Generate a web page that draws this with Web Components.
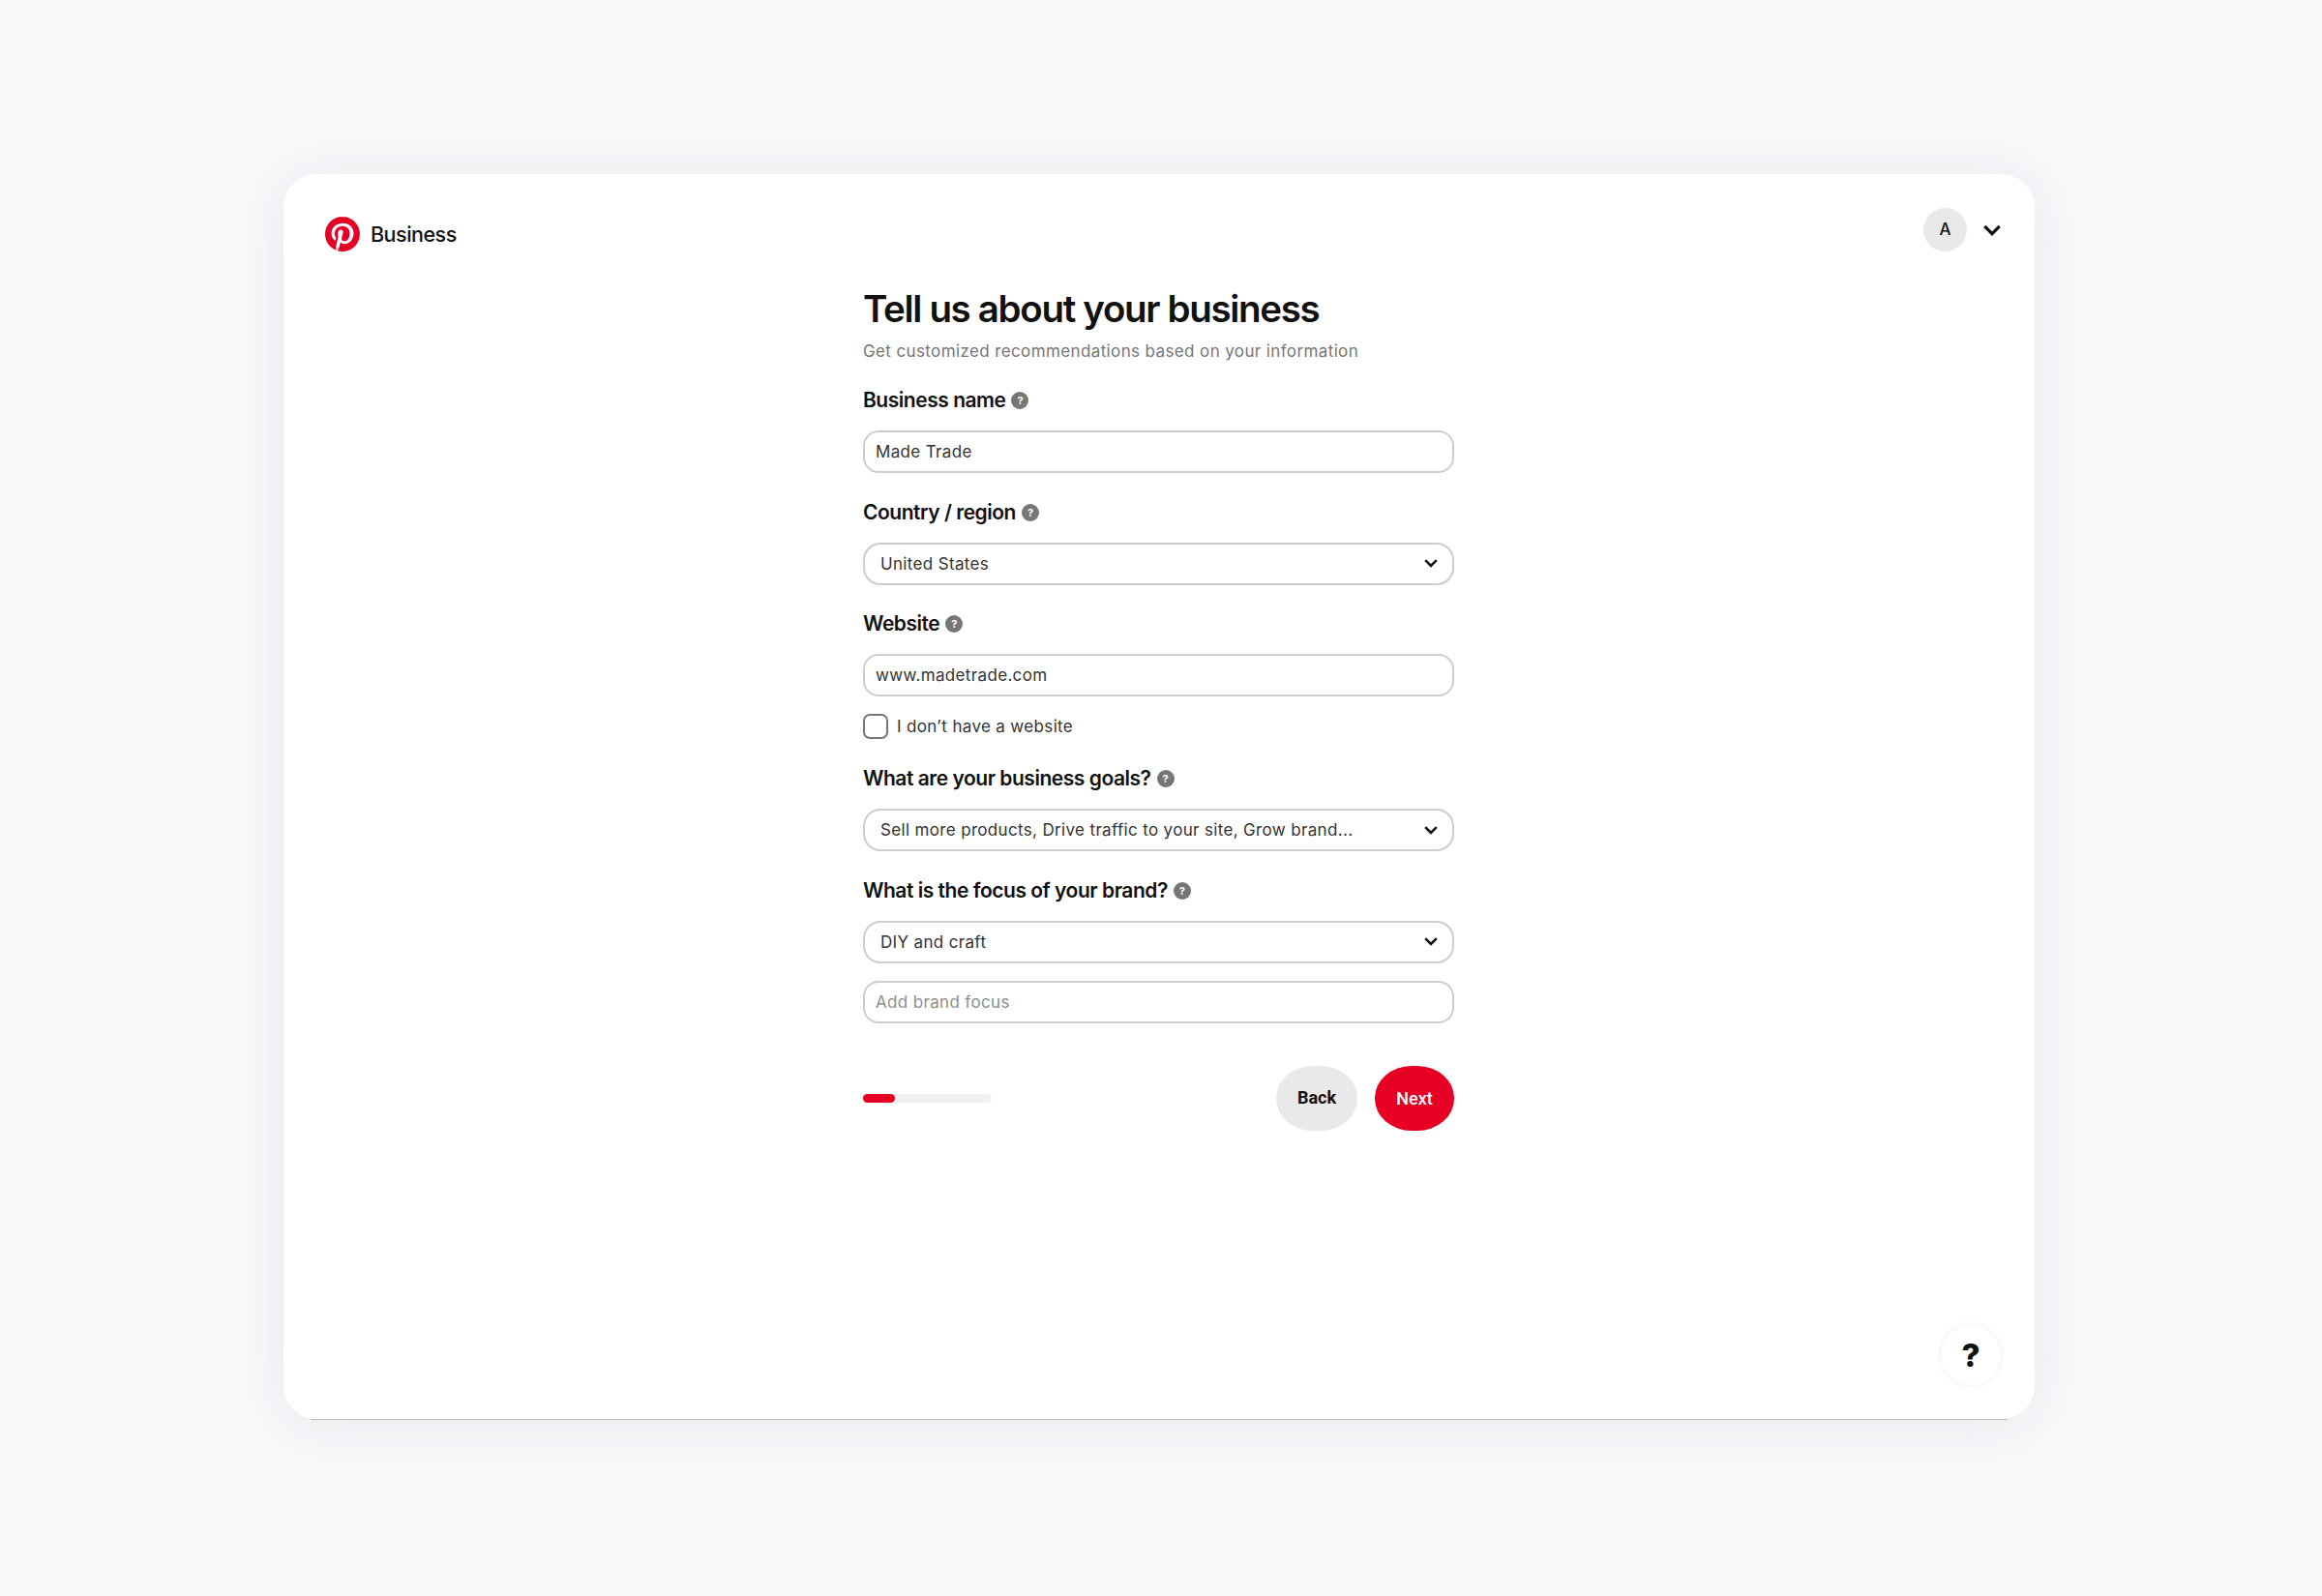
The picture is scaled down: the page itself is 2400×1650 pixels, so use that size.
<!DOCTYPE html>
<html lang="en">
<head>
<meta charset="utf-8">
<title>Pinterest Business</title>
<style>
  html, body { margin: 0; padding: 0; background: #f8f9fb; }
  body { font-family: Inter, "Liberation Sans", sans-serif; color: #111; }
</style>
</head>
<body>
<biz-page>
  <biz-header slot="header" initial="A"></biz-header>
  <biz-form>
    <biz-field label="Business name"><biz-input>Made Trade</biz-input></biz-field>
    <biz-field label="Country / region"><biz-select>United States</biz-select></biz-field>
    <biz-field label="Website">
      <biz-input>www.madetrade.com</biz-input>
      <biz-check>I don’t have a website</biz-check>
    </biz-field>
    <biz-field label="What are your business goals?"><biz-select>Sell more products, Drive traffic to your site, Grow brand...</biz-select></biz-field>
    <biz-field label="What is the focus of your brand?">
      <biz-select>DIY and craft</biz-select>
      <biz-input placeholder>Add brand focus</biz-input>
    </biz-field>
  </biz-form>
</biz-page>

<script>
// small helper, every element below is just a template + a shadow root
function tpl(html) {
  const t = document.createElement('template');
  t.innerHTML = html;
  return t;
}

class Base extends HTMLElement {
  connectedCallback() {
    if (this.shadowRoot) return;
    const root = this.attachShadow({mode: 'open'});
    root.appendChild(this.constructor.template.content.cloneNode(true));
    if (this.ready) this.ready(root);
  }
}

const chevron = `<svg viewBox="0 0 14 9" width="14" height="9"><path d="M1.2 1.2 7 7l5.8-5.8" fill="none" stroke="#111" stroke-width="2.6"/></svg>`;

class BizPage extends Base {
  static template = tpl(`
    <style>
      :host { display: block; padding: 180px 297px 183px 293px; }
      .card {
        position: relative; height: 1287px; box-sizing: border-box;
        background: #fff; border-radius: 34px;
        box-shadow: 0 4px 60px rgba(30,40,60,.085);
        padding: 35px 35px 0 43px;
      }
      /* thin grey line on the bottom edge, stops where the corners start */
      .card::after {
        content: ""; position: absolute; left: 28px; right: 28px; bottom: -1px; height: 1px; background: #bdbdbd;
      }
      .fab {
        position: absolute; right: 35px; bottom: 35px;
        width: 62px; height: 62px; border-radius: 50%; background: #fff;
        box-shadow: 0 0 6px rgba(0,0,0,.07);
        display: flex; align-items: center; justify-content: center;
        font: 800 33px/1 Inter, sans-serif; color: #111;
      }
    </style>
    <div class="card">
      <slot name="header"></slot>
      <slot></slot>
      <div class="fab">?</div>
    </div>
  `);
}

class BizHeader extends Base {
  static template = tpl(`
    <style>
      :host { display: flex; justify-content: space-between; align-items: flex-start; height: 45px; }
      .brand { display: flex; align-items: center; gap: 11px; margin-top: 9px; font: 500 21.5px/36px Inter, sans-serif; letter-spacing: -.5px; color: #111; }
      .brand svg { display: block; }
      .user { display: flex; align-items: center; gap: 17px; }
      .avatar { width: 45px; height: 45px; border-radius: 50%; background: #e9e9e9; display: flex; align-items: center; justify-content: center; font: 500 17px/1 Inter, sans-serif; color: #111; }
      .chev { display: block; }
    </style>
    <div class="brand">
      <svg viewBox="0 0 24 24" width="36" height="36"><circle cx="12" cy="12" r="11" fill="#fff"/><path fill="#e60023" d="M12.017 0C5.396 0 .029 5.367.029 11.987c0 5.079 3.158 9.417 7.618 11.162-.105-.949-.199-2.403.041-3.439.219-.937 1.406-5.957 1.406-5.957s-.359-.72-.359-1.781c0-1.663.967-2.911 2.168-2.911 1.024 0 1.518.769 1.518 1.688 0 1.029-.653 2.567-.992 3.992-.285 1.193.6 2.165 1.775 2.165 2.128 0 3.768-2.245 3.768-5.487 0-2.861-2.063-4.869-5.008-4.869-3.41 0-5.409 2.562-5.409 5.199 0 1.033.394 2.143.889 2.741.099.12.112.225.085.345-.09.375-.293 1.199-.334 1.363-.053.225-.172.271-.401.165-1.495-.69-2.433-2.878-2.433-4.646 0-3.776 2.748-7.252 7.92-7.252 4.158 0 7.392 2.967 7.392 6.923 0 4.135-2.607 7.462-6.233 7.462-1.214 0-2.354-.629-2.758-1.379l-.749 2.848c-.269 1.045-1.004 2.352-1.498 3.146 1.123.345 2.306.535 3.55.535 6.607 0 11.985-5.365 11.985-11.987C23.97 5.39 18.592.026 11.985.026L12.017 0z"/></svg>
      <span>Business</span>
    </div>
    <div class="user">
      <div class="avatar"></div>
      <svg class="chev" viewBox="0 0 18 12" width="18" height="12"><path d="M1.3 1.9 9 9.6l7.7-7.7" fill="none" stroke="#111" stroke-width="3.3"/></svg>
    </div>
  `);
  ready(root) {
    root.querySelector('.avatar').textContent = this.getAttribute('initial');
  }
}

class BizForm extends Base {
  static template = tpl(`
    <style>
      :host { display: block; width: 611px; margin: 35px 0 0 556px; }
      h1 { margin: 0 0 8px; font: 600 38.5px/48px Inter, sans-serif; letter-spacing: -1.33px; color: #111; }
      p { margin: 0 0 24px; font: 400 17px/24px Inter, sans-serif; letter-spacing: .38px; color: #767676; }
      .foot { display: flex; align-items: center; justify-content: space-between; margin-top: 44px; }
      .track { width: 133px; height: 9px; border-radius: 5px; background: #f0f0f0; }
      .fill { width: 33px; height: 9px; border-radius: 5px; background: #e60023; }
      .btns { display: flex; gap: 18px; }
    </style>
    <h1>Tell us about your business</h1>
    <p>Get customized recommendations based on your information</p>
    <slot></slot>
    <div class="foot">
      <div class="track"><div class="fill"></div></div>
      <div class="btns">
        <biz-button>Back</biz-button>
        <biz-button primary>Next</biz-button>
      </div>
    </div>
  `);
}

class BizField extends Base {
  static template = tpl(`
    <style>
      :host { display: block; margin-bottom: 25.5px; }
      :host(:last-child) { margin-bottom: 0; }
      .label { display: flex; align-items: center; gap: 6px; height: 28px; padding-top: 1px; margin: 0 0 17px; font: 600 21px/28px Inter, sans-serif; letter-spacing: -.47px; color: #111; }
      .help { width: 18px; height: 18px; border-radius: 50%; background: #767676; color: #fff; font: 700 11px/18px Inter, sans-serif; letter-spacing: 0; text-align: center; }
      .body { display: flex; flex-direction: column; gap: 18px; }
    </style>
    <div class="label"><span class="text"></span><span class="help">?</span></div>
    <div class="body"><slot></slot></div>
  `);
  ready(root) {
    root.querySelector('.text').textContent = this.getAttribute('label');
  }
}

const boxCss = `
  :host { display: flex; align-items: center; height: 44px; box-sizing: border-box; background: #fff;
    border: 2px solid #cdcdcd; border-radius: 16px;
    font: 400 17px/24px Inter, sans-serif; letter-spacing: .34px; color: #333; }
`;

class BizInput extends Base {
  static template = tpl(`
    <style>
      ${boxCss}
      :host { padding: 0 11px; }
      :host([placeholder]) { color: #8e8e8e; }
    </style>
    <slot></slot>
  `);
}

class BizSelect extends Base {
  static template = tpl(`
    <style>
      ${boxCss}
      :host { padding: 0 15px 0 16px; justify-content: space-between; border-radius: 18px; }
      svg { display: block; flex: none; }
    </style>
    <span><slot></slot></span>
    ${chevron}
  `);
}

class BizCheck extends Base {
  static template = tpl(`
    <style>
      :host { display: flex; align-items: center; gap: 9px; height: 26px; margin-bottom: .5px; font: 400 17px/24px Inter, sans-serif; letter-spacing: .34px; color: #333; }
      .box { width: 26px; height: 26px; box-sizing: border-box; border: 2px solid #767676; border-radius: 7px; }
    </style>
    <div class="box"></div>
    <slot></slot>
  `);
}

class BizButton extends Base {
  static template = tpl(`
    <style>
      :host { display: flex; align-items: center; justify-content: center; width: 84px; height: 67px; border-radius: 38px / 33px; background: #e9e9e9; color: #111; font: 700 18px/1 Roboto, sans-serif; }
      :host([primary]) { background: #e60023; color: #fff; width: 82px; font-weight: 500; padding-top: 1px; box-sizing: border-box; }
    </style>
    <slot></slot>
  `);
}

customElements.define('biz-button', BizButton);
customElements.define('biz-check', BizCheck);
customElements.define('biz-select', BizSelect);
customElements.define('biz-input', BizInput);
customElements.define('biz-field', BizField);
customElements.define('biz-form', BizForm);
customElements.define('biz-header', BizHeader);
customElements.define('biz-page', BizPage);
</script>
</body>
</html>
